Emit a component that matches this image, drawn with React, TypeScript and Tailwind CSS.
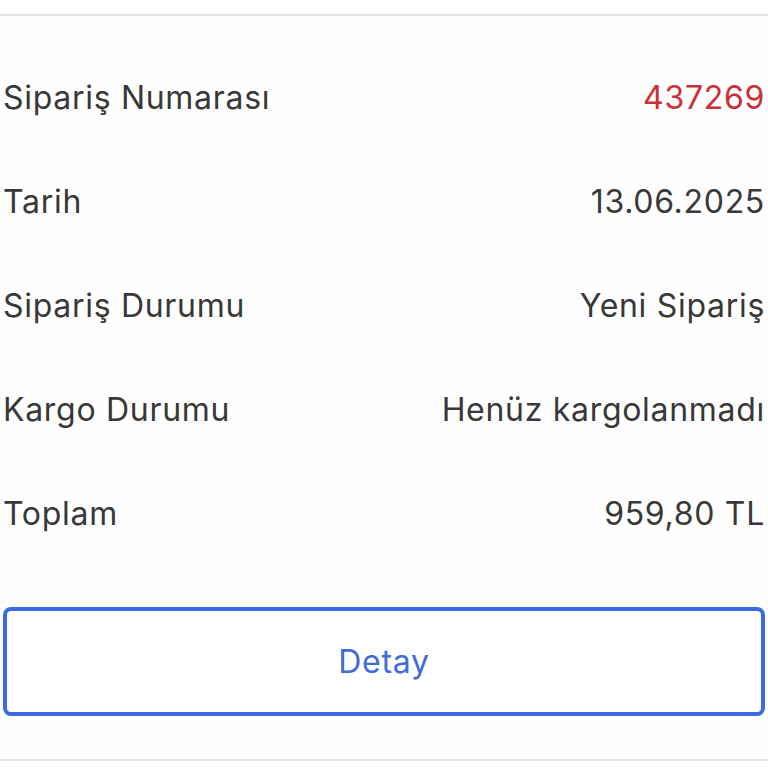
import { ReactNode } from "react";

const rows = [
  { label: "Sipariş Numarası", value: "437269", red: true },
  { label: "Tarih", value: "13.06.2025" },
  { label: "Sipariş Durumu", value: "Yeni Sipariş" },
  { label: "Kargo Durumu", value: "Henüz kargolanmadı" },
  { label: "Toplam", value: "959,80 TL" },
];

const App = (): ReactNode => {
  return (
    <div
      className="min-h-[768px] w-[768px] bg-white text-[#383838]"
      style={{ fontFamily: "Inter, 'Noto Sans', sans-serif" }}
    >
      <div className="h-[16px] bg-white border-b-2 border-[#e2e2e2] shadow-[0_2px_4px_rgba(0,0,0,0.05)]" />
      <div className="px-[3px] pt-[30px] bg-[#fefefe]">
        {rows.map((row) => (
          <div
            key={row.label}
            className="flex h-[104px] items-center justify-between text-[32px] tracking-[0.7px]"
          >
            <span>{row.label}</span>
            <span className={row.red ? "text-[#cc2e36]" : ""}>{row.value}</span>
          </div>
        ))}
        <button className="mt-[41px] flex h-[109px] w-full items-center justify-center rounded-[8px] border-[4px] border-[#3b6be0] bg-white text-[32px] tracking-[0.7px] text-[#3f6cd8]">
          Detay
        </button>
        <div className="h-[43px]" />
      </div>
      <div className="border-t-2 border-[#e6e6e6]" />
    </div>
  );
};

export default App;
